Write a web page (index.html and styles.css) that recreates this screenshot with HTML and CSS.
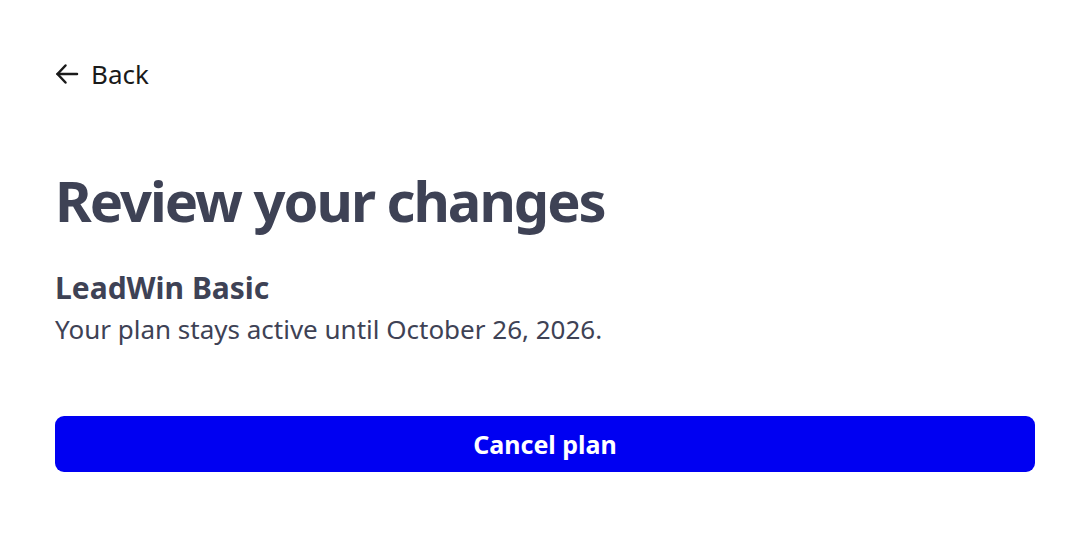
FILE: index.html
```html
<!DOCTYPE html>
<html lang="en">
<head>
    <meta charset="UTF-8">
    <meta name="viewport" content="width=device-width, initial-scale=1.0">
    <title>Review your changes</title>
    <link rel="stylesheet" href="styles.css">
</head>
<body>

<div class="page">
    <a class="back" href="#">
        <svg width="24" height="24" viewBox="0 0 24 24" fill="none" stroke="#1a1a1a" stroke-width="2.5" stroke-linecap="round" stroke-linejoin="round">
            <path d="M22 12H2.5"/>
            <path d="M10.5 3.5L2.5 12l8 8.5"/>
        </svg>
        <span>Back</span>
    </a>

    <h1>Review your changes</h1>

    <div class="plan">
        <h3>LeadWin Basic</h3>
        <p>Your plan stays active until October 26, 2026.</p>
    </div>

    <button class="cancel">Cancel plan</button>
</div>

</body>
</html>
```

FILE: styles.css
```css
body {
    margin: 0;
    font-family: "Noto Sans", "Open Sans", sans-serif;
    background-color: #fff;
    color: #3e4255;
}
.page {
    padding: 58px 45px 0 55px;
}
.back {
    display: inline-flex;
    align-items: center;
    gap: 12px;
    height: 32px;
    color: #1a1a1a;
    text-decoration: none;
    font-size: 26px;
    line-height: 32px;
}
h1 {
    margin: 75px 0 0;
    font-size: 56px;
    font-weight: 700;
    letter-spacing: -2px;
    line-height: 68px;
}
.plan {
    margin-top: 35px;
}
.plan h3 {
    margin: 0;
    font-size: 30px;
    font-weight: 700;
    line-height: 38px;
}
.plan p {
    margin: 5px 0 0;
    font-size: 26px;
    line-height: 34px;
}
.cancel {
    display: block;
    width: 100%;
    height: 56px;
    margin-top: 70px;
    border: none;
    border-radius: 9px;
    background-color: #0000f2;
    color: #fff;
    font-family: inherit;
    font-size: 25px;
    font-weight: 700;
    cursor: pointer;
}
```
